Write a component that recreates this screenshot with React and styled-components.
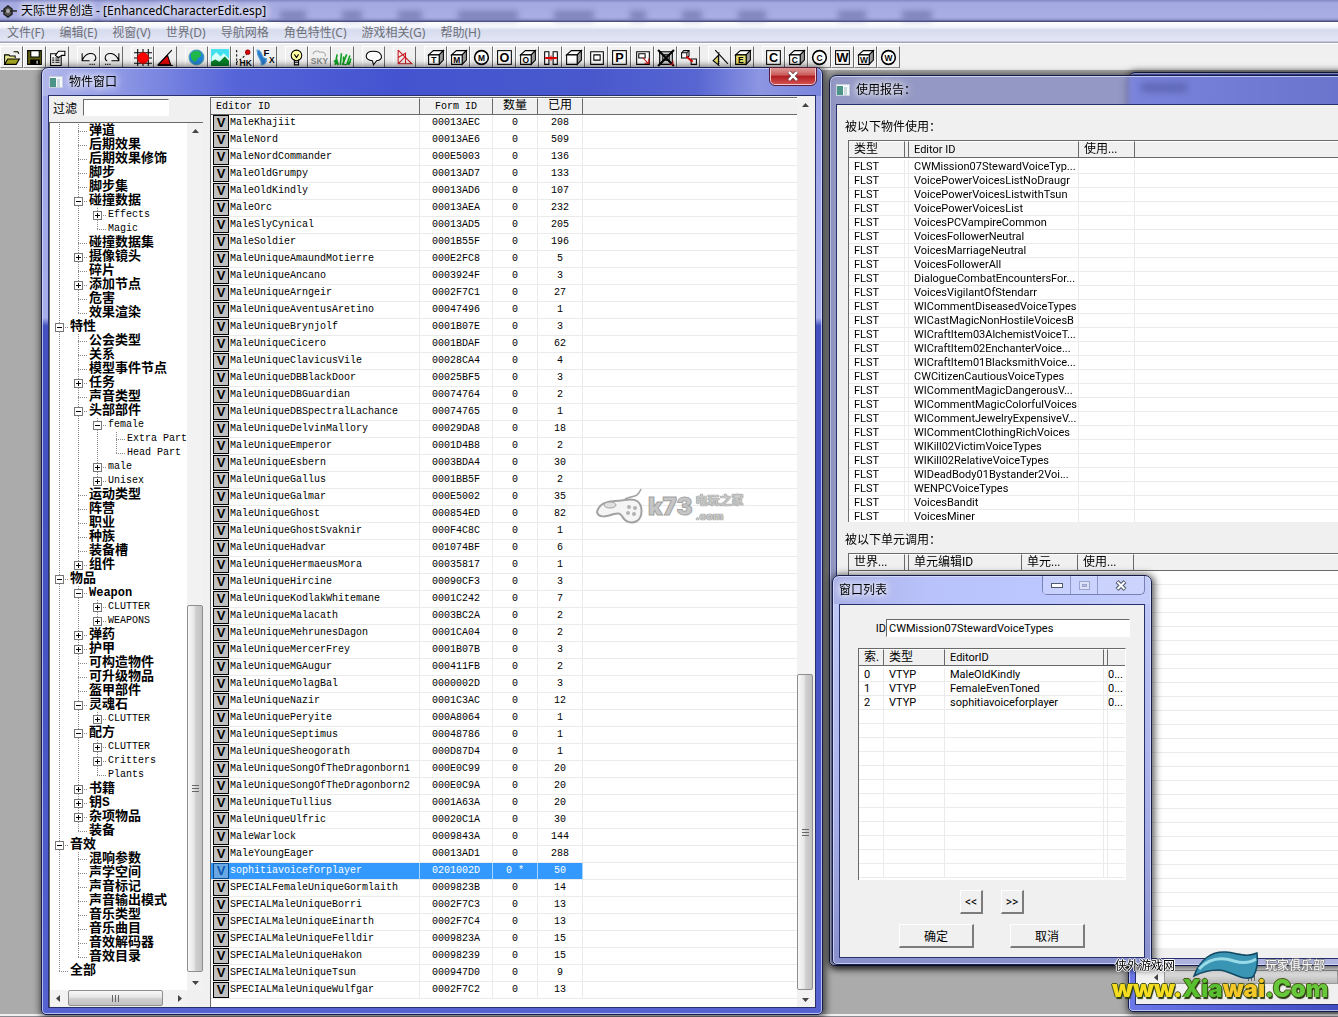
import React from 'react';
import styled, { createGlobalStyle, css } from 'styled-components';

const ui = `"Noto Sans", "Noto Sans CJK SC", sans-serif`;
const sans = `Roboto, "Noto Sans CJK SC", sans-serif`;
const mono = `"Liberation Mono", "Noto Sans CJK SC", monospace`;

const GlobalStyle = createGlobalStyle`
  * { box-sizing: border-box; }
  body { margin: 0; background: #ababab; color: #000; font: 12px ${sans}; overflow: hidden; }
  button, input { font: inherit; color: inherit; margin: 0; padding: 0; border-radius: 0; }
`;

/* ---------- application frame ---------- */
const Shell = styled.div`
  height: 100vh;
  display: flex;
  flex-direction: column;
  overflow: hidden;
`;
const AppTitle = styled.header`
  position: relative;
  display: flex;
  align-items: center;
  height: 22px;
  flex: none;
  padding-left: 1px;
  gap: 4px;
  background: linear-gradient(#8288c4 0, #a4a9e0 3px, #a9aee4 17px, #8f94cc 20px, #4a5080 21px);
`;
const AppTitleText = styled.h1`
  margin: 0;
  font: 12px/18px ${ui};
  text-shadow: 0 0 6px #fff, 0 0 8px #fff, 0 0 10px #fff;
  z-index: 1;
`;
const Smudges = styled.div`
  position: absolute;
  left: 280px;
  top: 11px;
  display: flex;
  gap: 36px;
  filter: blur(3px);
`;
const Smudge = styled.i`
  width: ${(p) => p.$w}px;
  height: 9px;
  background: #5f659c;
  opacity: 0.6;
`;
const MenuBar = styled.nav`
  display: flex;
  gap: 1px;
  height: 21px;
  flex: none;
  align-items: center;
  background: linear-gradient(#fff 0, #f4f6fc 5px, #d6dbee 8px, #e2e6f5 19px, #a0a4b4 20px);
`;
const MenuItem = styled.button`
  border: 0;
  background: none;
  color: #6e7078;
  padding: 0 7px;
  font: 12px/18px ${ui};
  white-space: nowrap;
`;
const ToolBar = styled.div`
  display: flex;
  gap: 8px;
  height: 27px;
  flex: none;
  padding-top: 2px;
  background: #f0f0f0;
  border-top: 1px solid #fff;
`;
const ToolGroup = styled.div`
  display: flex;
`;
const ToolButton = styled.button`
  width: 23px;
  height: 22px;
  border: 1px solid #fff;
  border-right-color: #6c6c6c;
  border-bottom-color: #8a8a8a;
  background: #f0f0f0;
  display: grid;
  place-items: center;
`;
const Desktop = styled.main`
  position: relative;
  flex: 1;
  background: #ababab;
`;
const StatusStrip = styled.footer`
  height: 3px;
  flex: none;
  background: #f0f0f0;
  border-bottom: 1px solid #8a8a90;
`;

/* ---------- windows ---------- */
const Window = styled.section`
  position: absolute;
  display: flex;
  flex-direction: column;
  padding: 0 6px 6px;
  border: 1px solid #151c4c;
  border-radius: 7px 7px 5px 5px;
  box-shadow: inset 0 0 0 1px rgba(225, 230, 255, 0.7), 1px 1px 7px 2px rgba(0, 0, 0, 0.6);
`;
const ObjectWin = styled(Window)`
  left: 41px;
  top: -3px;
  bottom: -1px;
  width: 782px;
  z-index: 3;
  background:
    linear-gradient(90deg, #b2b7ea 0, #949ee6 8%, #5564d8 25%, #4454d0 45%, #4858cc 70%, #5866d2 84%, #8c96e2 92%, #7985dc) 0 0 / 100% 28px no-repeat,
    linear-gradient(#9ba3e6 0, #a6aeea 250px, #4450c0 258px, #4854c4 640px, #5562d0 100%);
`;
const ReportWin = styled(Window)`
  left: 829px;
  right: -8px;
  top: 5px;
  height: 891px;
  z-index: 2;
  background: rgba(132, 140, 212, 0.62);
  backdrop-filter: blur(2px);
`;
const RenderWin = styled(Window)`
  left: 1128px;
  right: -8px;
  top: 2px;
  bottom: 2px;
  z-index: 1;
  background: linear-gradient(90deg, #6c78e8, #4e5cd0 60%, #3e4cbc);
`;
const ListWin = styled(Window)`
  left: 832px;
  top: 505px;
  width: 320px;
  z-index: 4;
  background: linear-gradient(90deg, #a9b0e6 0, #b9c2fa 30%, #bcc6ff 65%, #c4cdfa) 0 0 / 100% 28px no-repeat,
    linear-gradient(#c2caf8, #a8b0e8 60%, #8890cc);
`;
const TitleBar = styled.header`
  display: flex;
  align-items: center;
  height: ${(p) => p.$h}px;
  flex: none;
  gap: 6px;
  padding-left: ${(p) => p.$pad}px;
`;
const TitleText = styled.h2`
  margin: 0;
  flex: 1;
  font: 12px/18px ${ui};
  text-shadow: 0 0 6px #fff, 0 0 8px rgba(255, 255, 255, 0.8), 0 0 12px rgba(255, 255, 255, 0.7);
`;
const Client = styled.div`
  flex: 1;
  min-height: 0;
  display: flex;
  flex-direction: ${(p) => (p.$row ? 'row' : 'column')};
  background: #f0f0f0;
  border: 1px solid #28306c;
`;
const CloseRed = styled.button`
  align-self: flex-start;
  width: 46px;
  height: 17px;
  border: 1px solid #f0c8cc;
  border-top: 0;
  outline: 1px solid #5a1c38;
  border-radius: 0 0 5px 5px;
  background: linear-gradient(#dc9a98, #cc5a58 45%, #b01c20 50%, #d0504c);
  display: grid;
  place-items: center;
`;
const Captions = styled.div`
  align-self: flex-start;
  display: flex;
  border: 1px solid #7880b4;
  border-top: 0;
  border-radius: 0 0 5px 5px;
`;
const Caption = styled.button`
  width: ${(p) => p.$w}px;
  height: 18px;
  border: 0;
  border-right: 1px solid #9098c8;
  background: rgba(215, 222, 255, 0.45);
  display: grid;
  place-items: center;
  &:last-child { border-right: 0; border-radius: 0 0 5px 0; }
`;
const GhostLabel = styled.i`
  width: 46px;
  height: 9px;
  margin: 0 0 6px 6px;
  background: #1c2880;
  filter: blur(3px);
`;

/* ---------- scroll bars ---------- */
const Track = styled.div`
  display: flex;
  flex: none;
  flex-direction: ${(p) => (p.$horizontal ? 'row' : 'column')};
  ${(p) => (p.$horizontal ? 'height: 16px;' : 'width: 16px;')}
  background: #f2f2f2;
`;
const ArrowButton = styled.button`
  width: 16px;
  height: 16px;
  flex: none;
  border: 0;
  background: none;
  display: grid;
  place-items: center;
`;
const Space = styled.span`
  flex: ${(p) => p.$grow} 1 0;
`;
const Thumb = styled.span`
  flex: ${(p) => p.$grow} 1 0;
  display: grid;
  place-items: center;
  border: 1px solid #8e8e8e;
  border-radius: 2px;
  background: linear-gradient(${(p) => (p.$horizontal ? '180deg' : '90deg')}, #f8f8f8, #e6e6e6 45%, #cfcfcf 55%, #c2c2c2);
`;
const arrows = { up: 'M1 6 4.500 2 8 6z', down: 'M1 3 4.500 7 8 3z', left: 'M6 1 2 4.500 6 8z', right: 'M3 1 7 4.500 3 8z' };
const Arrow = ({ dir }) => (
  <ArrowButton aria-label={`scroll ${dir}`}>
    <svg width="9" height="9"><path d={arrows[dir]} fill="#444" /></svg>
  </ArrowButton>
);
const Grip = ({ horizontal }) => (
  <svg width="9" height="9">
    <path d={horizontal ? 'M1.500 1v7M4.500 1v7M7.500 1v7' : 'M1 1.500h7M1 4.500h7M1 7.500h7'} stroke="#666" />
  </svg>
);
const ScrollBar = ({ horizontal, before, size, after }) => (
  <Track $horizontal={horizontal}>
    <Arrow dir={horizontal ? 'left' : 'up'} />
    <Space $grow={before} />
    <Thumb $horizontal={horizontal} $grow={size}><Grip horizontal={horizontal} /></Thumb>
    <Space $grow={after} />
    <Arrow dir={horizontal ? 'right' : 'down'} />
  </Track>
);

/* ---------- tables ---------- */
const gridLines = (step) => css`
  background: repeating-linear-gradient(#fff 0, #fff ${step - 1}px, #ebebeb ${step - 1}px, #ebebeb ${step}px);
`;
const Sunken = styled.div`
  display: flex;
  flex-direction: column;
  overflow: hidden;
  background: #fff;
  border-top: 1px solid #696969;
  border-left: 1px solid #696969;
`;
const Filler = styled.div`
  flex: 1;
  ${(p) => gridLines(p.$step)}
`;
const Table = styled.table`
  width: 100%;
  table-layout: fixed;
  border-collapse: separate;
  border-spacing: 0;
  flex: none;
  th {
    height: 17px;
    padding: 0 0 0 5px;
    text-align: left;
    font-weight: normal;
    line-height: 15px;
    white-space: nowrap;
    overflow: hidden;
    background: #f0f0f0;
    border-top: 1px solid #fff;
    border-right: 1px solid #696969;
    border-bottom: 1px solid #696969;
  }
  th:last-child { border-right: 0; }
  td {
    padding: 0;
    white-space: nowrap;
    overflow: hidden;
    border-right: 1px solid #ebebeb;
    border-bottom: 1px solid #ebebeb;
  }
  td:last-child { border-right: 0; }
`;
const ObjectTable = styled(Table)`
  font: 10px ${mono};
  th.cjk { font-size: 12px; }
  th.mid, td.mid { text-align: center; padding: 0; }
  td { height: 17px; line-height: 16px; }
`;
const ObjectRow = styled.tr`
  ${(p) => p.$selected && css`
    color: #fff;
    td:not(:last-child) { background: #3399ff; border-right-color: #a8d2ff; }
  `}
`;
const NameCell = styled.div`
  display: flex;
  align-items: center;
  height: 16px;
  gap: 1px;
  padding-left: 2px;
`;
const Badge = styled.span`
  width: 16px;
  height: 16px;
  flex: none;
  border: 1px solid #000;
  background: #c0c0c0;
  color: #000;
  text-align: center;
  font: bold 13px/14px "Liberation Sans", sans-serif;
  ${(p) => p.$selected && css`
    background: #6aa8e4;
    border-color: #0a4a90;
    color: #0a58b0;
  `}
`;
const SmallTable = styled(Table)`
  font: 11px ${sans};
  th.cjk { font-size: 12px; }
  th.thin, td.thin { padding: 0; }
  td { height: 14px; line-height: 13px; padding-left: 5px; }
  tbody::before { content: ''; display: block; height: 2px; }
`;
const Cols = ({ widths }) => (
  <colgroup>{widths.map((w, i) => <col key={i} width={w || undefined} />)}</colgroup>
);

/* ---------- left pane / tree ---------- */
const LeftPane = styled.div`
  width: 154px;
  flex: none;
  display: flex;
  flex-direction: column;
`;
const FilterRow = styled.div`
  display: flex;
  align-items: center;
  gap: 6px;
  height: 26px;
  padding: 0 0 4px 4px;
  flex: none;
`;
const Field = styled.input`
  border: 1px solid #fff;
  border-top-color: #696969;
  border-left-color: #696969;
  background: #fff;
  outline: 0;
  height: ${(p) => p.$h}px;
  width: ${(p) => p.$w}px;
  padding-left: 2px;
  min-width: 0;
`;
const TreeBox = styled.div`
  flex: 1;
  min-height: 0;
  display: grid;
  grid-template: minmax(0, 1fr) 17px / minmax(0, 1fr) 16px;
  background: #f0f0f0;
  border-top: 1px solid #696969;
  border-left: 1px solid #696969;
`;
const Tree = styled.ul`
  margin: 0;
  padding: 1px 0 0;
  list-style: none;
  overflow: hidden;
  background: #fff;
`;
const TreeRow = styled.li`
  display: flex;
  align-items: center;
  height: 14px;
  white-space: nowrap;
`;
const dotsV = 'repeating-linear-gradient(#888 0 1px, transparent 1px 2px)';
const dotsH = 'repeating-linear-gradient(90deg, #888 0 1px, transparent 1px 2px)';
const Rail = styled.span`
  width: 19px;
  height: 14px;
  flex: none;
  display: flex;
  align-items: center;
  padding-left: 5px;
  background:
    ${dotsV} 9px 0 / 1px ${(p) => (p.$line === 'full' ? 14 : p.$line === 'half' ? 7 : 0)}px no-repeat,
    ${dotsH} 9px 7px / ${(p) => (p.$own ? 10 : 0)}px 1px no-repeat;
`;
const Toggle = styled.button`
  width: 9px;
  height: 9px;
  border: 1px solid #777;
  background:
    linear-gradient(#000, #000) 1px 3px / 5px 1px no-repeat,
    linear-gradient(#000, #000) 3px 1px / 1px ${(p) => (p.$open ? 0 : 5)}px no-repeat,
    #fff;
`;
const TreeText = styled.span`
  padding-left: 1px;
  line-height: 14px;
  font-family: ${mono};
  font-size: ${(p) => (p.$kind === 'cjk' ? 13 : p.$kind === 'bold' ? 12 : 10)}px;
  font-weight: ${(p) => (p.$kind ? 'bold' : 'normal')};
`;
const PaneGap = styled.div`
  width: 7px;
  flex: none;
`;
const ListPane = styled.div`
  flex: 1;
  min-width: 0;
  display: flex;
  padding: 1px 2px 0 0;
`;
const ListSunken = styled(Sunken)`
  flex: 1;
  min-width: 0;
`;

/* ---------- report and dialog ---------- */
const SectionLabel = styled.h3`
  margin: ${(p) => p.$top}px 0 4px 8px;
  font: 12px/18px ${sans};
`;
const ReportBox = styled(Sunken)`
  margin-left: 11px;
  ${(p) => (p.$h ? `height: ${p.$h}px; flex: none;` : 'flex: 1; margin-bottom: 10px;')}
`;
const DialogBody = styled(Client)`
  padding: 14px 18px 9px;
`;
const IdRow = styled.label`
  display: flex;
  align-items: center;
  justify-content: flex-end;
  font: 11px ${sans};
  margin: 0 -4px;
`;
const DialogTable = styled(Sunken)`
  height: 232px;
  margin-top: 11px;
  border-right: 1px solid #fff;
`;
const ButtonRow = styled.div`
  display: flex;
  justify-content: center;
  gap: ${(p) => p.$gap}px;
  margin-top: 10px;
`;
const PushButton = styled.button`
  width: ${(p) => p.$w}px;
  height: 24px;
  border: 1px solid #fff;
  border-right: 2px solid #7c7c7c;
  border-bottom: 2px solid #7c7c7c;
  background: #f0f0f0;
  font: 12px ${sans};
`;
const RenderClient = styled(Client)`
  justify-content: flex-end;
`;
const RenderScroll = styled.div`
  display: flex;
  align-items: center;
  height: 14px;
  padding-left: 12px;
  margin-bottom: 20px;
`;
const RenderThumb = styled.span`
  flex: 1;
  height: 14px;
  display: grid;
  place-items: center;
  border: 1px solid #9a9a9a;
  background: linear-gradient(#eee, #ccc 60%, #b8b8b8);
`;

/* ---------- watermarks ---------- */
const K73 = styled.div`
  position: absolute;
  left: 595px;
  top: 418px;
  z-index: 5;
  display: flex;
  align-items: center;
  gap: 3px;
  color: #c0c0c0;
  opacity: 0.9;
`;
const K73Name = styled.span`
  font: 900 24px/30px Inter, sans-serif;
  -webkit-text-stroke: 1px #999;
`;
const K73Side = styled.span`
  display: flex;
  flex-direction: column;
  font: 900 12px/18px Inter, "Noto Sans CJK SC", sans-serif;
  text-shadow: 0 0 1px #777, 0 0 1px #777;
`;
const K73Domain = styled.span`
  font-size: 11px;
  line-height: 12px;
`;
const Xiawai = styled.div`
  position: absolute;
  right: 8px;
  bottom: 12px;
  width: 218px;
  z-index: 6;
`;
const XiawaiTop = styled.div`
  display: flex;
  justify-content: space-between;
  align-items: center;
  padding: 0 5px 0 3px;
  height: 20px;
  font: 12px/18px ${sans};
`;
const Outlined = styled.span`
  color: ${(p) => p.$c};
  text-shadow: 1px 0 ${(p) => p.$o}, -1px 0 ${(p) => p.$o}, 0 1px ${(p) => p.$o}, 0 -1px ${(p) => p.$o};
`;
const Swoosh = styled.svg`
  position: absolute;
  left: 80px;
  top: -7px;
`;
const SiteName = styled.div`
  position: relative;
  display: flex;
  font: 900 24px/26px Inter, "Noto Sans", sans-serif;
  text-shadow: 1px 2px 1px #2a3a10, -1px 0 0 #4a5a18, 1px 0 0 #4a5a18, 0 -1px 0 #4a5a18;
`;
const Tint = styled.span`
  color: ${(p) => p.$c};
`;

/* ---------- icons ---------- */
const Svg = ({ children, ...r }) => (
  <svg width="20" height="19" viewBox="1 0 17 18" fill="none" stroke="#000" {...r}>{children}</svg>
);
const Glyph = ({ x, y, s, children, c = '#000' }) => (
  <text x={x} y={y} fontSize={s} fontFamily="Liberation Sans" fontWeight="bold" textAnchor="middle" fill={c} stroke="none">{children}</text>
);
const Cube = ({ c, front = '#fff' }) => (
  <Svg>
    <path d="M2.500 6.500 7 2.500h9.500L12.500 6.500z" fill="#fff" />
    <path d="M12.500 6.500l4-4v9l-4 4z" fill="#999" />
    <path d="M2.500 6.500h10v9h-10z" fill={front} />
    {c && <Glyph x={7.5} y={14} s={8}>{c}</Glyph>}
  </Svg>
);
const Sq = ({ c }) => <Svg><rect x="2.500" y="2.500" width="13" height="13" fill="#fff" /><Glyph x={9} y={13.5} s={12}>{c}</Glyph></Svg>;
const Ci = ({ c }) => <Svg><circle cx="9" cy="9" r="6.500" strokeWidth="1.500" fill="#fff" /><Glyph x={9} y={12} s={8}>{c}</Glyph></Svg>;

const icons = {
  open: <Svg><path d="M2.500 15.500v-9h4l1 1h5v2M11 3.500h4l1 2" fill="#e8e890" /><path d="M2.500 15.500l3-5h11l-3 5z" fill="#a0a020" /></Svg>,
  save: <Svg><path d="M2.500 2.500h13v13h-13z" fill="#606010" /><path d="M5.500 2.500h8v6h-8z" fill="#fff" /><path d="M5.500 11.500h8v4h-8z" fill="#000" /><path d="M11.500 12v3" stroke="#fff" /></Svg>,
  props: <Svg><path d="M2.500 5.500h10v11h-10z" fill="#fff" /><path d="M4 9.500h2m1 0h4M4 11.500h2m1 0h4M4 13.500h2m1 0h4" /><path d="M7 7l3-4h6v4h-3l-3 2z" fill="#fff" /></Svg>,
  undo: <Svg><path d="M3 5v7h7M3 12C6 4 15 3 16 9c0 2-1 3-2 3" /><path d="M10 15.500h6" strokeDasharray="1 1" /></Svg>,
  redo: <Svg><path d="M16 5v7H9M16 12C13 4 4 3 3 9c0 2 1 3 2 3" /><path d="M3 15.500h6" strokeDasharray="1 1" /></Svg>,
  grid: <Svg><path d="M4.500 1v16M9.500 1v16M14.500 1v16M1 4.500h17M1 9.500h17M1 14.500h17" /><circle cx="9.500" cy="9.500" r="5" fill="#f00" stroke="#d00" /></Svg>,
  angle: <Svg><path d="M2 16L15 2" /><path d="M2 16L11 7l3 9z" fill="#e00000" /><path d="M2 16.500h14" /></Svg>,
  globe: <Svg><circle cx="9" cy="9" r="7" fill="#2484d8" stroke="#4aa0b0" /><path d="M4 5c3-3 8-3 9 0s-1 4-2 4-2 5-4 4-4-4-3-8z" fill="#20b848" stroke="none" /></Svg>,
  land: <Svg><path d="M1 1h17v16H1z" fill="#40e0f0" stroke="none" /><path d="M2 8l4-4 4 4 3-3 5 5v7H1z" fill="#d8fff8" stroke="none" /><path d="M1 13l4-2 4 2 5-5 4 4v5H1z" fill="#088028" stroke="none" /></Svg>,
  hk: <Svg><path d="M3.500 2v14M3 14l10-8" strokeDasharray="2 2" /><circle cx="14" cy="4" r="2" fill="#e00000" stroke="#a00000" /><Glyph x={12} y={17} s={8}>HK</Glyph></Svg>,
  fx: <Svg><path d="M1 2c6 0 3 8 9 8 0 4-2 6-5 6 1-5-4-6-4-14z" fill="#2878c8" stroke="#58a0d8" /><Glyph x={10} y={8} s={9}>F</Glyph><Glyph x={15} y={14} s={8}>X</Glyph></Svg>,
  bulb: <Svg><circle cx="9" cy="7" r="5" fill="#ffffa0" /><path d="M7 11v5h4v-5M7 13.500h4M7 6l2 3 2-3" /></Svg>,
  sky: <Svg><path d="M3 6c0-3 5-4 6-2 4-1 7 2 5 4" stroke="#aaa" /><Glyph x={9} y={15} s={8} c="#888">SKY</Glyph></Svg>,
  grass: <Svg><path d="M2 16L4 6m1 10L3 9m4 7L8 5m1 11l4-10m-3 10V8m3 8l3-9m-1 9l2-6M1 12l4 4m6 0l6-3" stroke="#10a020" strokeWidth="1.500" /></Svg>,
  talk: <Svg><path d="M8 12C0 12 0 3 9 3s10 9 3 9l-3 4z" fill="#fff" /></Svg>,
  path: <Svg><path d="M3 2v13M3 2l13 13H3M3 9l7-4v10M3 15l7-7" stroke="#c81820" /></Svg>,
  join: <Svg><path d="M3.500 3.500h4v12h-4zM11.500 3.500h4v12h-4z" fill="#fff" /><path d="M4 9.500h11" stroke="#e00000" strokeWidth="2" /><path d="M9.500 7v5" stroke="#e00000" /></Svg>,
  room: <Svg><path d="M3.500 3.500h12v12h-12z" fill="#fff" /><path d="M6.500 6.500h6v5h-6z" /></Svg>,
  move: <Svg><path d="M3.500 3.500h12v12h-12z" fill="#fff" /><path d="M5.500 5.500h6v4h-6z" /><path d="M9 9l6 6M11 14.500h4V10" stroke="#d01010" /></Svg>,
  cross: <Svg><path d="M3.500 3.500h12v12h-12z" fill="#ccc" /><path d="M6.500 6.500h6v5h-6z" /><path d="M2 2l15 15M17 2L2 17" strokeWidth="2" /><path d="M13 15.500h3V12" stroke="#d01010" /></Svg>,
  link: <Svg><path d="M2.500 4.500l2-2h5v5l-2 2h-5zM11.500 10.500h5v5h-5z" fill="#fff" /><path d="M2.500 4.500h5v5M7.500 4.500l2-2" /><path d="M7 8l6 5" stroke="#e00000" strokeWidth="2" /></Svg>,
  lamp: <Svg><path d="M5 2l12 13" /><path d="M3 12l5-5v9z" fill="#e8e070" /><path d="M8.500 4v13" strokeDasharray="1 1" /></Svg>,
};
const toolGroups = [
  [['打开', icons.open], ['保存', icons.save], ['属性', icons.props]],
  [['撤销', icons.undo], ['重做', icons.redo]],
  [['网格', icons.grid], ['角度', icons.angle]],
  [['世界', icons.globe], ['地形', icons.land], ['Havok', icons.hk], ['特效', icons.fx]],
  [['灯光', icons.bulb], ['天空', icons.sky], ['草', icons.grass]],
  [['对话', icons.talk]],
  [['导航网格', icons.path]],
  [['T', <Cube c="T" />], ['M', <Cube c="M" />], ['M 圆', <Ci c="M" />], ['O', <Sq c="O" />], ['O 体', <Cube c="O" />], ['连接', icons.join],
    ['体', <Cube />], ['房间', icons.room], ['P', <Sq c="P" />], ['移动', icons.move], ['清除', icons.cross], ['链接', icons.link]],
  [['灯', icons.lamp], ['E', <Cube c="E" front="#e8e070" />]],
  [['C', <Sq c="C" />], ['C 体', <Cube c="C" />], ['C 圆', <Ci c="C" />], ['W', <Sq c="W" />], ['W 体', <Cube c="W" />], ['W 圆', <Ci c="W" />]],
];
const WindowIcon = () => (
  <svg width="14" height="12">
    <rect x="0.500" y="0.500" width="13" height="11" fill="#f4f8fa" stroke="#c8d0e0" />
    <rect x="1" y="2" width="6" height="9" fill="#4c9488" /><rect x="8" y="3" width="3" height="8" fill="#c8d8dc" />
  </svg>
);

/* ---------- data ---------- */
const menus = ['文件(F)', '编辑(E)', '视窗(V)', '世界(D)', '导航网格', '角色特性(C)', '游戏相关(G)', '帮助(H)'];

// depth, toggle ('+', '-' or ''), label
const tree = `1||弹道
1||后期效果
1||后期效果修饰
1||脚步
1||脚步集
1|-|碰撞数据
2|+|Effects
2||Magic
1||碰撞数据集
1|+|摄像镜头
1||碎片
1|+|添加节点
1||危害
1||效果渲染
0|-|特性
1||公会类型
1||关系
1||模型事件节点
1|+|任务
1||声音类型
1|-|头部部件
2|-|female
3||Extra Part
3||Head Part
2|+|male
2|+|Unisex
1||运动类型
1||阵营
1||职业
1||种族
1||装备槽
1|+|组件
0|-|物品
1|-|Weapon
2|+|CLUTTER
2|+|WEAPONS
1|+|弹药
1|+|护甲
1||可构造物件
1||可升级物品
1||盔甲部件
1|-|灵魂石
2|+|CLUTTER
1|-|配方
2|+|CLUTTER
2|+|Critters
2||Plants
1|+|书籍
1|+|钥S
1|+|杂项物品
1||装备
0|-|音效
1||混响参数
1||声学空间
1||声音标记
1||声音输出模式
1||音乐类型
1||音乐曲目
1||音效解码器
1||音效目录
0||全部`.split('\n').map((l) => {
  const [d, t, label] = l.split('|');
  return { depth: Number(d), toggle: t, label };
});
const hasLater = (index, depth) => {
  for (let i = index + 1; i < tree.length; i += 1) {
    if (tree[i].depth < depth) return false;
    if (tree[i].depth === depth) return true;
  }
  return false;
};
const kindOf = (n) => (n.depth > 1 ? '' : n.label === 'Weapon' ? 'bold' : 'cjk');

const objects = `MaleKhajiit 00013AEC 208
MaleNord 00013AE6 509
MaleNordCommander 000E5003 136
MaleOldGrumpy 00013AD7 133
MaleOldKindly 00013AD6 107
MaleOrc 00013AEA 232
MaleSlyCynical 00013AD5 205
MaleSoldier 0001B55F 196
MaleUniqueAmaundMotierre 000E2FC8 5
MaleUniqueAncano 0003924F 3
MaleUniqueArngeir 0002F7C1 27
MaleUniqueAventusAretino 00047496 1
MaleUniqueBrynjolf 0001B07E 3
MaleUniqueCicero 0001BDAF 62
MaleUniqueClavicusVile 00028CA4 4
MaleUniqueDBBlackDoor 00025BF5 3
MaleUniqueDBGuardian 00074764 2
MaleUniqueDBSpectralLachance 00074765 1
MaleUniqueDelvinMallory 00029DA8 18
MaleUniqueEmperor 0001D4B8 2
MaleUniqueEsbern 0003BDA4 30
MaleUniqueGallus 0001BB5F 2
MaleUniqueGalmar 000E5002 35
MaleUniqueGhost 000854ED 82
MaleUniqueGhostSvaknir 000F4C8C 1
MaleUniqueHadvar 001074BF 6
MaleUniqueHermaeusMora 00035817 1
MaleUniqueHircine 00090CF3 3
MaleUniqueKodlakWhitemane 0001C242 7
MaleUniqueMalacath 0003BC2A 2
MaleUniqueMehrunesDagon 0001CA04 2
MaleUniqueMercerFrey 0001B07B 3
MaleUniqueMGAugur 000411FB 2
MaleUniqueMolagBal 0000002D 3
MaleUniqueNazir 0001C3AC 12
MaleUniquePeryite 000A8064 1
MaleUniqueSeptimus 00048786 1
MaleUniqueSheogorath 000D87D4 1
MaleUniqueSongOfTheDragonborn1 000E0C99 20
MaleUniqueSongOfTheDragonborn2 000E0C9A 20
MaleUniqueTullius 0001A63A 20
MaleUniqueUlfric 00020C1A 30
MaleWarlock 0009843A 144
MaleYoungEager 00013AD1 288
sophitiavoiceforplayer 0201002D 50
SPECIALFemaleUniqueGormlaith 0009823B 14
SPECIALMaleUniqueBorri 0002F7C3 13
SPECIALMaleUniqueEinarth 0002F7C4 13
SPECIALMaleUniqueFelldir 0009823A 15
SPECIALMaleUniqueHakon 00098239 15
SPECIALMaleUniqueTsun 000947D0 9
SPECIALMaleUniqueWulfgar 0002F7C2 13`.split('\n').map((l) => l.split(' '));

const uses = `CWMission07StewardVoiceTyp... VoicePowerVoicesListNoDraugr VoicePowerVoicesListwithTsun VoicePowerVoicesList VoicesPCVampireCommon VoicesFollowerNeutral VoicesMarriageNeutral VoicesFollowerAll DialogueCombatEncountersFor... VoicesVigilantOfStendarr WICommentDiseasedVoiceTypes WICastMagicNonHostileVoicesB WICraftItem03AlchemistVoiceT... WICraftItem02EnchanterVoice... WICraftItem01BlacksmithVoice... CWCitizenCautiousVoiceTypes WICommentMagicDangerousV... WICommentMagicColorfulVoices WICommentJewelryExpensiveV... WICommentClothingRichVoices WIKill02VictimVoiceTypes WIKill02RelativeVoiceTypes WIDeadBody01Bystander2Voi... WENPCVoiceTypes VoicesBandit VoicesMiner`.split(' ');

const listed = ['MaleOldKindly', 'FemaleEvenToned', 'sophitiavoiceforplayer'];
const listRows = Array.from({ length: 15 }, (_, i) => listed[i] || '');

/* ---------- windows ---------- */
function ObjectWindow() {
  return (
    <ObjectWin>
      <TitleBar $h={27} $pad={1}>
        <WindowIcon />
        <TitleText>物件窗口</TitleText>
        <CloseRed aria-label="关闭">
          <svg width="12" height="10"><path d="M2 1l8 8M10 1L2 9" stroke="#5a3038" strokeWidth="4" /><path d="M2 1l8 8M10 1L2 9" stroke="#fff" strokeWidth="2.500" /></svg>
        </CloseRed>
      </TitleBar>
      <Client $row>
        <LeftPane>
          <FilterRow>
            <label htmlFor="filter">过滤</label>
            <Field id="filter" $w={86} $h={17} />
          </FilterRow>
          <TreeBox>
            <Tree>
              {tree.map((n, i) => (
                <TreeRow key={i}>
                  {Array.from({ length: n.depth }, (_, d) => (
                    <Rail key={d} $line={hasLater(i, d) ? 'full' : 'none'} />
                  ))}
                  <Rail $own $line={hasLater(i, n.depth) ? 'full' : 'half'}>
                    {n.toggle && <Toggle aria-label={n.label} $open={n.toggle === '-'} />}
                  </Rail>
                  <TreeText $kind={kindOf(n)}>{n.label}</TreeText>
                </TreeRow>
              ))}
            </Tree>
            <ScrollBar before={467} size={366} after={2} />
            <ScrollBar horizontal before={2} size={95} after={8} />
          </TreeBox>
        </LeftPane>
        <PaneGap />
        <ListPane>
          <ListSunken>
            <ObjectTable>
              <Cols widths={[209, 73, 45, 45, 0]} />
              <thead>
                <tr><th>Editor ID</th><th className="mid">Form ID</th><th className="mid cjk">数量</th><th className="mid cjk">已用</th><th /></tr>
              </thead>
              <tbody>
                {objects.map(([name, id, used]) => {
                  const selected = id === '0201002D';
                  return (
                    <ObjectRow key={id} $selected={selected}>
                      <td><NameCell><Badge $selected={selected}>V</Badge>{name}</NameCell></td>
                      <td className="mid">{id}</td>
                      <td className="mid">{selected ? '0 *' : '0'}</td>
                      <td className="mid">{used}</td>
                      <td />
                    </ObjectRow>
                  );
                })}
              </tbody>
            </ObjectTable>
            <Filler $step={17} />
          </ListSunken>
          <ScrollBar before={561} size={314} after={1} />
        </ListPane>
      </Client>
    </ObjectWin>
  );
}

function ReportWindow() {
  return (
    <ReportWin>
      <TitleBar $h={28} $pad={0}>
        <WindowIcon />
        <TitleText>使用报告：</TitleText>
      </TitleBar>
      <Client>
        <SectionLabel $top={13}>被以下物件使用：</SectionLabel>
        <ReportBox $h={382}>
          <SmallTable>
            <Cols widths={[56, 4, 170, 56, 0]} />
            <thead><tr><th className="cjk">类型</th><th className="thin" /><th>Editor ID</th><th className="cjk">使用...</th><th /></tr></thead>
            <tbody>
              {uses.map((u) => (
                <tr key={u}><td>FLST</td><td className="thin" /><td>{u}</td><td /><td /></tr>
              ))}
            </tbody>
          </SmallTable>
        </ReportBox>
        <SectionLabel $top={9}>被以下单元调用：</SectionLabel>
        <ReportBox>
          <SmallTable>
            <Cols widths={[56, 4, 113, 56, 56, 0]} />
            <thead><tr><th className="cjk">世界...</th><th className="thin" /><th className="cjk">单元编辑ID</th><th className="cjk">单元...</th><th className="cjk">使用...</th><th /></tr></thead>
          </SmallTable>
          <Filler $step={14} />
        </ReportBox>
      </Client>
    </ReportWin>
  );
}

function ListDialog() {
  return (
    <ListWin>
      <TitleBar $h={28} $pad={0}>
        <TitleText>窗口列表</TitleText>
        <Captions>
          <Caption $w={28} aria-label="最小化"><svg width="12" height="6"><rect x="0.500" y="1.500" width="11" height="4" fill="#fff" stroke="#50586c" /></svg></Caption>
          <Caption $w={27} aria-label="最大化"><svg width="11" height="9"><rect x="0.500" y="0.500" width="10" height="8" fill="#dce0f8" stroke="#9ca4cc" /><rect x="3.500" y="3.500" width="4" height="2" fill="#b8c0ee" stroke="#9ca4cc" /></svg></Caption>
          <Caption $w={46} aria-label="关闭"><svg width="12" height="11"><path d="M2 1.500l8 8M10 1.500l-8 8" stroke="#50586c" strokeWidth="4" /><path d="M2.500 2l7 7M9.500 2l-7 7" stroke="#fff" strokeWidth="2" /></svg></Caption>
        </Captions>
      </TitleBar>
      <DialogBody>
        <IdRow>ID<Field $w={244} $h={18} defaultValue="CWMission07StewardVoiceTypes" /></IdRow>
        <DialogTable>
          <SmallTable>
            <Cols widths={[25, 61, 159, 4, 0]} />
            <thead><tr><th className="cjk">索.</th><th className="cjk">类型</th><th>EditorID</th><th className="thin" /><th /></tr></thead>
            <tbody>
              {listRows.map((name, i) => (
                <tr key={i}>
                  <td>{name && i}</td><td>{name && 'VTYP'}</td><td>{name}</td><td className="thin" /><td className="thin">{name && '0...'}</td>
                </tr>
              ))}
            </tbody>
          </SmallTable>
        </DialogTable>
        <ButtonRow $gap={18}>
          <PushButton $w={23}>&lt;&lt;</PushButton>
          <PushButton $w={23}>&gt;&gt;</PushButton>
        </ButtonRow>
        <ButtonRow $gap={36}>
          <PushButton $w={75}>确定</PushButton>
          <PushButton $w={75}>取消</PushButton>
        </ButtonRow>
      </DialogBody>
    </ListWin>
  );
}

function RenderWindow() {
  return (
    <RenderWin>
      <TitleBar $h={34} $pad={0}><GhostLabel /></TitleBar>
      <RenderClient>
        <RenderScroll>
          <Arrow dir="left" />
          <RenderThumb><Grip horizontal /></RenderThumb>
        </RenderScroll>
      </RenderClient>
    </RenderWin>
  );
}

export default function App() {
  return (
    <Shell>
      <GlobalStyle />
      <AppTitle>
        <svg width="16" height="14"><path d="M0 7h16M3 5l4-3 4 3v5l-4 3-4-3z" stroke="#222" strokeWidth="1.500" fill="#555" /><circle cx="7" cy="7" r="2" fill="#aaa" /></svg>
        <AppTitleText>天际世界创造 - [EnhancedCharacterEdit.esp]</AppTitleText>
        <Smudges>{[26, 20, 24, 60, 40, 16, 20, 28, 0, 28, 30].map((w, i) => <Smudge key={i} $w={w} />)}</Smudges>
      </AppTitle>
      <MenuBar>{menus.map((m) => <MenuItem key={m}>{m}</MenuItem>)}</MenuBar>
      <ToolBar>
        {toolGroups.map((g, i) => (
          <ToolGroup key={i}>{g.map(([name, icon]) => <ToolButton key={name} aria-label={name}>{icon}</ToolButton>)}</ToolGroup>
        ))}
      </ToolBar>
      <Desktop>
        <RenderWindow />
        <ReportWindow />
        <ObjectWindow />
        <ListDialog />
        <K73>
          <svg width="50" height="38" viewBox="0 0 50 38">
            <path d="M30 11c8-4 12 0 16-10" fill="none" stroke="#999" strokeWidth="1.500" />
            <path d="M2 24C4 16 12 13 20 13c10 0 16-4 22 0 6 4 6 16 0 20-6 3-12 1-15-5-2-3-4-3-8-2-8 3-16 4-17-2z" fill="#f4f4f4" stroke="#999" strokeWidth="2" />
            <ellipse cx="15" cy="17" rx="6" ry="3" fill="#ddd" stroke="#999" />
            <g fill="#aaa"><circle cx="34" cy="19" r="2" /><circle cx="40" cy="20" r="2" /><circle cx="33" cy="25" r="2" /><circle cx="39" cy="26" r="2" /></g>
          </svg>
          <K73Name>k73</K73Name>
          <K73Side><span>电玩之家</span><K73Domain>.com</K73Domain></K73Side>
        </K73>
        <Xiawai>
          <Swoosh width="68" height="32" viewBox="0 0 68 32">
            <path d="M2 27C8 10 20 2 34 3c12 1 20 6 31 1 1 8 1 16-4 24-12 5-22-7-35-7-10 0-16 2-24 6z" fill="#3a94b4" stroke="#124a64" strokeWidth="1.500" />
            <path d="M7 20C18 8 30 8 42 12c10 3 16 2 22-2" fill="none" stroke="#9adbe8" strokeWidth="3" />
          </Swoosh>
          <XiawaiTop>
            <Outlined $c="#000" $o="#fff">侠外游戏网</Outlined>
            <Outlined $c="#fff" $o="#888">玩家俱乐部</Outlined>
          </XiawaiTop>
          <SiteName>
            <Tint $c="#f4dc20">www.</Tint><Tint $c="#58c030">Xia</Tint><Tint $c="#f4c828">wai</Tint><Tint $c="#68c83c">.Com</Tint>
          </SiteName>
        </Xiawai>
      </Desktop>
      <StatusStrip />
    </Shell>
  );
}
